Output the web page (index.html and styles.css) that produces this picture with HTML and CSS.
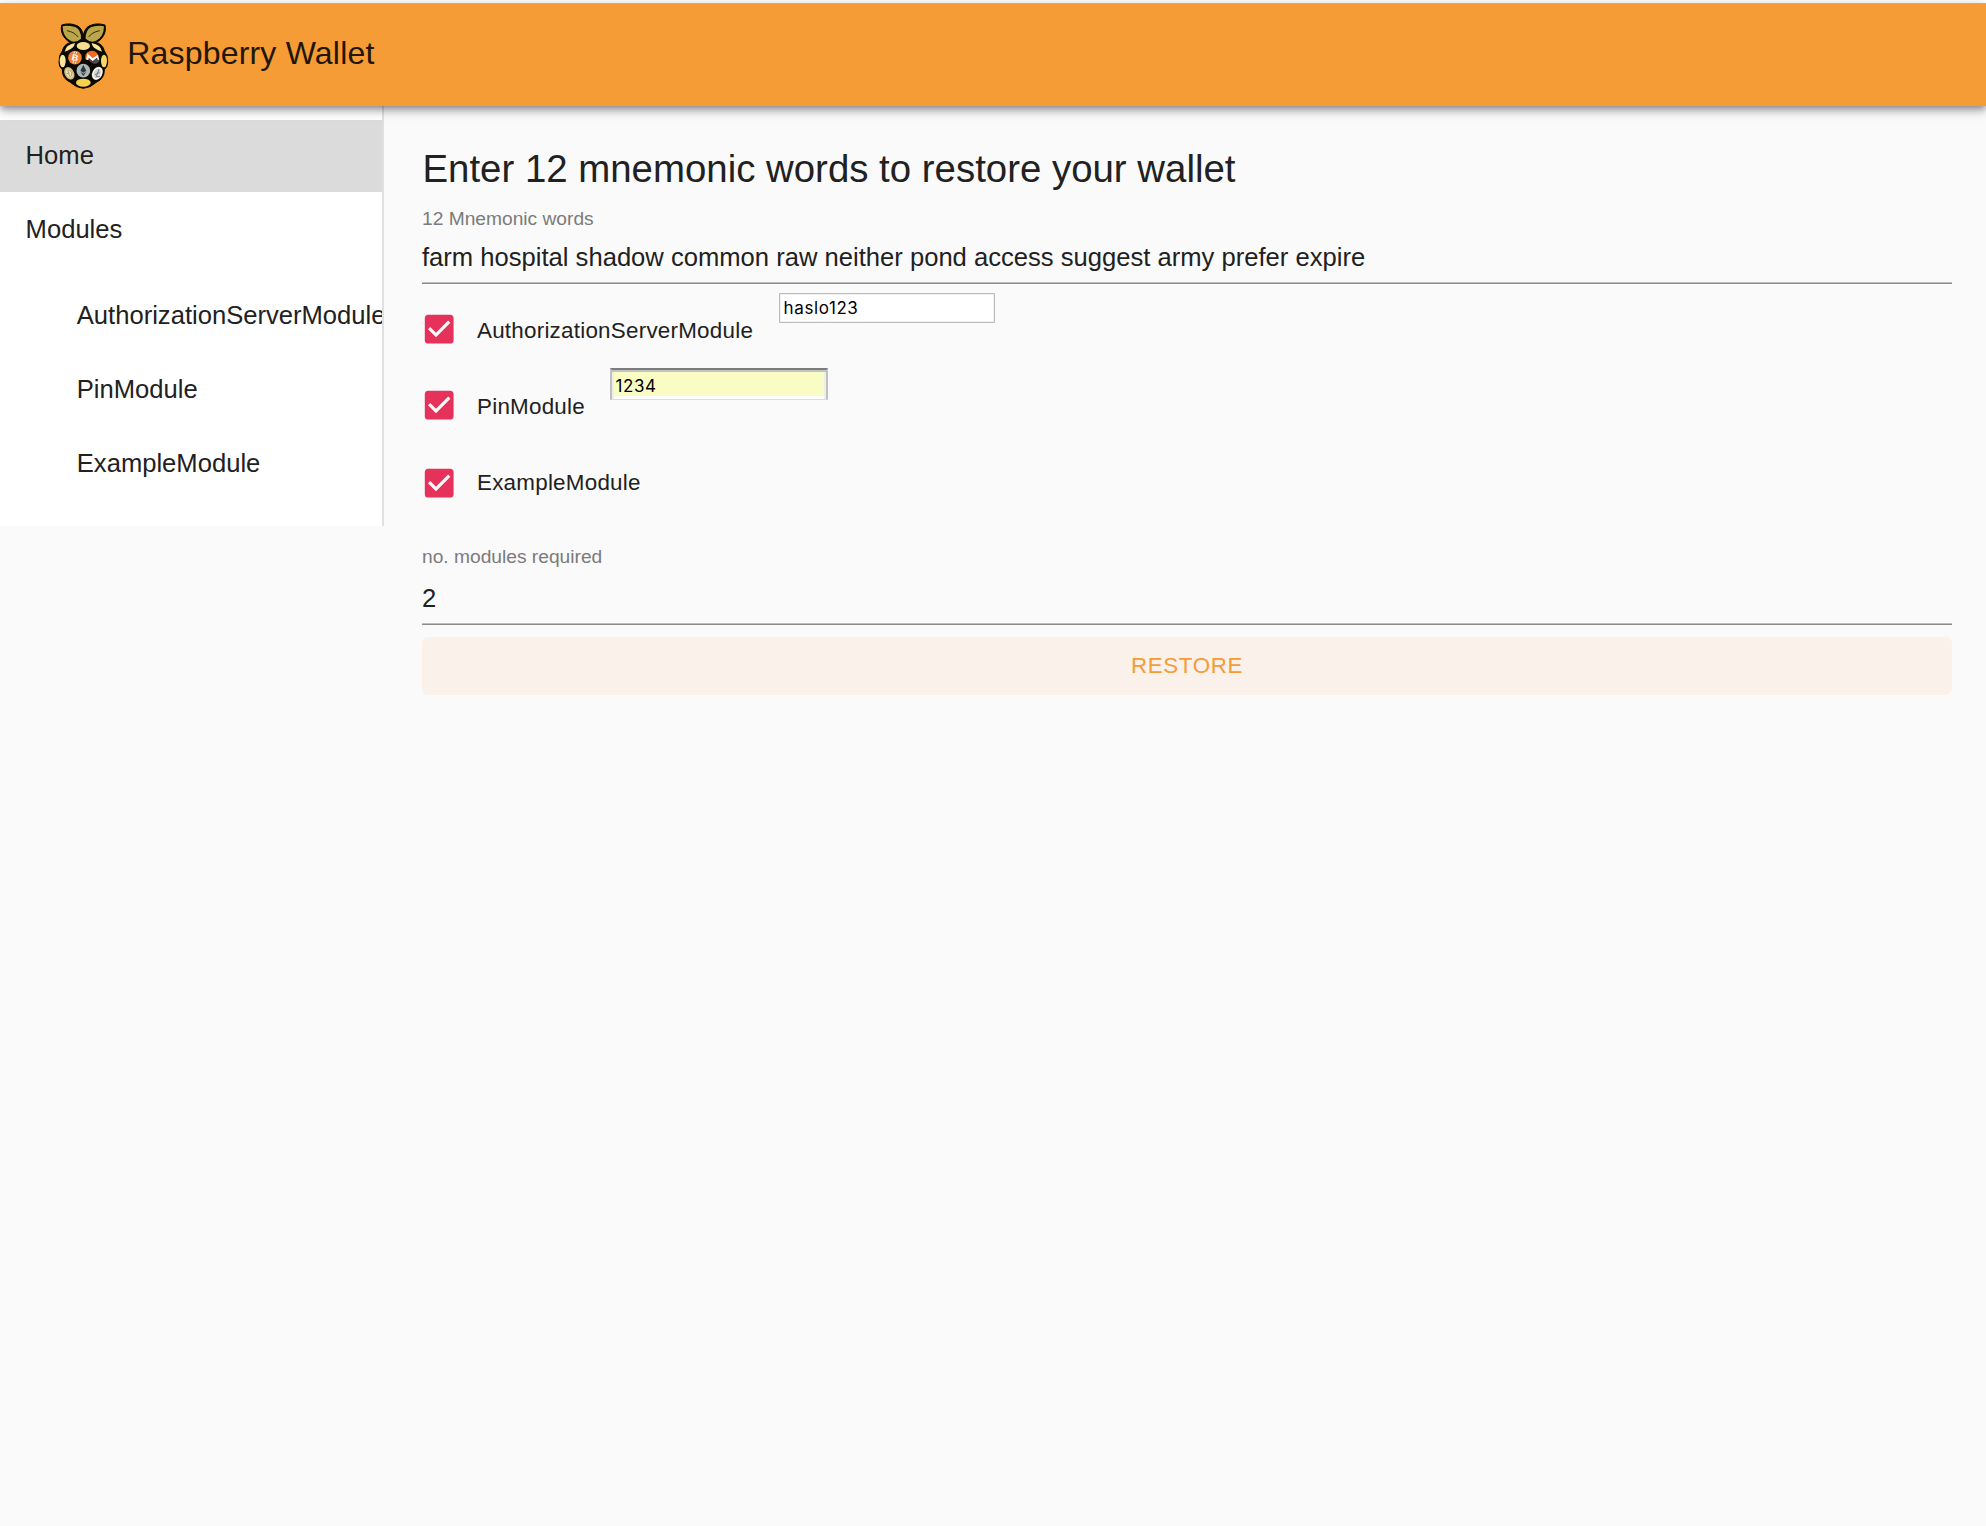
FILE: index.html
```html
<!DOCTYPE html>
<html lang="en">
<head>
<meta charset="utf-8">
<title>Raspberry Wallet</title>
<link rel="stylesheet" href="styles.css">
</head>
<body>
<header class="appbar">
  <svg class="logo" viewBox="50 38 158 200" aria-hidden="true">
    <path d="M64 44Q90 36 112 47Q126 55 129 77Q132 55 146 47Q168 36 194 44Q199 66 184 84Q177 93 167 96Q187 101 192 122Q203 134 202 156Q202 170 192 178Q193 205 168 216Q150 233 129 234Q108 233 90 216Q65 205 66 178Q56 170 56 156Q55 134 66 122Q71 101 91 96Q81 93 74 84Q59 66 64 44Z" fill="#0b0800" stroke="#0b0800" stroke-width="3"/>
    <path d="M67 48L78 46L91 47L105 50Q123 59 122 85Q105 100 88 90Q67 77 67 48ZM191 48L180 46L167 47L153 50Q135 59 136 85Q153 100 170 90Q191 77 191 48Z" fill="#bba64b"/>
    <path d="M80 61Q104 66 113 80M178 61Q154 66 145 80" fill="none" stroke="#1b1700" stroke-width="2.5"/>
    <ellipse cx="129" cy="107" rx="20" ry="12" fill="#f8df8c"/>
    <path d="M73 124Q76 103 104 98Q102 116 73 124ZM185 124Q182 103 154 98Q156 116 185 124Z" fill="#f8e49c"/>
    <ellipse cx="67" cy="152" rx="9" ry="19" fill="#f9e6a0"/>
    <ellipse cx="191" cy="152" rx="9" ry="19" fill="#f5d766"/>
    <ellipse cx="129" cy="217" rx="22" ry="12" fill="#f5d14d"/>
    <circle cx="104" cy="142" r="20.500" fill="#ef8133"/>
    <text class="coin" x="104" y="151" fill="#fff" transform="rotate(12 104 142)">B</text>
    <path d="M101 129l1-5M108 130l1-5M98 158l1-5M105 160l1-5" stroke="#fff" stroke-width="3"/>
    <path d="M135 147Q132 129 147 123Q166 117 175 136L176 143L172 135L156 147L141 130V148Z" fill="#f26822"/>
    <path d="M138 148L141 129L157 144L172 133L177 148L171 149L170 142L157 153L145 143V149Z" fill="#fff"/>
    <path d="M145 149L146 144L157 154L170 143L172 149H178Q174 162 161 160Q149 157 145 149Z" fill="#4d4d4d"/>
    <circle cx="129" cy="181" r="20.500" fill="#a9b7b9"/>
    <path d="M129 164L138 181L129 187L120 181ZM120 184L129 190L138 184L129 197Z" fill="#303638"/>
    <ellipse cx="87" cy="189" rx="14" ry="20" transform="rotate(-28 87 189)" fill="#cfba79"/>
    <ellipse cx="87" cy="189" rx="9" ry="14" transform="rotate(-28 87 189)" fill="#eee5c5"/>
    <path d="M82 180l6-1q10 8 6 18l-6 1zM79 190l9-2" fill="none" stroke="#b59d57" stroke-width="3"/>
    <ellipse cx="171" cy="189" rx="15" ry="21" transform="rotate(28 171 189)" fill="#d7d7d7"/>
    <ellipse cx="171" cy="189" rx="12" ry="17" transform="rotate(28 171 189)" fill="none" stroke="#fff" stroke-width="3"/>
    <path d="M176 177L168 199H179M164 193L178 186" fill="none" stroke="#777" stroke-width="3"/>
  </svg>
  <span class="brand">Raspberry Wallet</span>
</header>
<div class="layout">
  <nav class="drawer">
    <a class="item selected">Home</a>
    <a class="item">Modules</a>
    <div class="sub">
      <a class="item">AuthorizationServerModule</a>
      <a class="item">PinModule</a>
      <a class="item">ExampleModule</a>
    </div>
  </nav>
  <main class="content">
    <h1 class="heading">Enter 12 mnemonic words to restore your wallet</h1>
    <div class="label">12 Mnemonic words</div>
    <div class="field">farm hospital shadow common raw neither pond access suggest army prefer expire</div>
    <div class="modules">
      <div class="row">
        <svg class="check" viewBox="0 0 24 24"><path d="M19 3H5c-1.110 0-2 .9-2 2v14c0 1.100.89 2 2 2h14c1.110 0 2-.9 2-2V5c0-1.100-.89-2-2-2zm-9 14l-5-5 1.410-1.410L10 14.170l7.590-7.590L19 8l-9 9z"/></svg>
        <span class="name">AuthorizationServerModule</span>
        <div class="entry">haslo123</div>
      </div>
      <div class="row">
        <svg class="check" viewBox="0 0 24 24"><path d="M19 3H5c-1.110 0-2 .9-2 2v14c0 1.100.89 2 2 2h14c1.110 0 2-.9 2-2V5c0-1.100-.89-2-2-2zm-9 14l-5-5 1.410-1.410L10 14.170l7.590-7.590L19 8l-9 9z"/></svg>
        <span class="name">PinModule</span>
        <div class="entry autofill">1234</div>
      </div>
      <div class="row last">
        <svg class="check" viewBox="0 0 24 24"><path d="M19 3H5c-1.110 0-2 .9-2 2v14c0 1.100.89 2 2 2h14c1.110 0 2-.9 2-2V5c0-1.100-.89-2-2-2zm-9 14l-5-5 1.410-1.410L10 14.170l7.590-7.590L19 8l-9 9z"/></svg>
        <span class="name">ExampleModule</span>
      </div>
    </div>
    <div class="label required">no. modules required</div>
    <div class="field count">2</div>
    <button class="restore">RESTORE</button>
  </main>
</div>
</body>
</html>
```
FILE: styles.css
```css
* { box-sizing: border-box; }
body {
  margin: 0;
  min-height: 1526px;
  padding-top: 3px;
  background: linear-gradient(#fff 3px, #fafafa 3px);
  color: #212121;
  font-family: "Liberation Sans", Arial, sans-serif;
}
.appbar {
  position: relative;
  z-index: 1;
  display: flex;
  align-items: flex-start;
  height: 103px;
  padding-left: 56.500px;
  border-top: 1px solid #b5afa9;
  background: #f59c37;
  box-shadow: 0 3px 6px -1px rgba(0,0,0,.3), 0 6px 8px rgba(0,0,0,.16), 0 2px 16px rgba(0,0,0,.12);
}
.logo { width: 52.670px; height: 66.670px; margin-top: 18.670px; }
.coin { font-size: 27px; font-weight: bold; text-anchor: middle; }
.brand {
  margin: 29px 0 0 18px;
  font-size: 32px;
  line-height: 40px;
  color: #221607;
  letter-spacing: .2px;
}
.layout { display: flex; align-items: flex-start; }
.drawer {
  flex: none;
  width: 384px;
  height: 420px;
  padding-top: 14px;
  overflow: hidden;
  background: #fff;
  border-right: 2px solid #e0e0e0;
}
.item {
  display: flex;
  align-items: center;
  height: 72px;
  margin-bottom: 2px;
  padding: 0 0 1px 25.600px;
  font-size: 25.600px;
  white-space: nowrap;
}
.selected { background: #dbdbdb; }
.sub { padding: 12px 0 0 51.200px; }
.content { flex: 1; padding: 41px 34px 0 38px; }
.heading { margin: 0; padding-left: .5px; font-size: 38.400px; line-height: 44px; font-weight: 400; }
.label { margin-top: 17px; font-size: 19.200px; line-height: 22px; color: #7b7b7b; }
.field {
  padding: 6px 0 5px;
  border-bottom: 1px solid #8c8c8c;
  box-shadow: inset 0 -1px #bdbdbd;
  font-size: 25.600px;
  line-height: 42px;
}
.modules { padding-top: 8px; }
.row { display: flex; align-items: flex-start; height: 76px; }
.check { width: 38.400px; height: 38.400px; margin: 17.600px 0 0 -2.200px; fill: #e6325b; }
.last .check { margin-top: 19.600px; }
.name { margin: 0 25.500px 0 18.800px; font-size: 22.400px; line-height: 78px; letter-spacing: .24px; }
.entry {
  width: 216px;
  height: 30px;
  margin-top: 1px;
  padding-left: 4px;
  background: #fff;
  border: 1px solid #bdbdbd;
  box-shadow: inset 0 0 0 1px #f0f0f0;
  color: #000;
  font: 17px/29px Inter, sans-serif;
  letter-spacing: .6px;
}
.autofill {
  width: 218px;
  height: 32px;
  margin-top: 0;
  padding-left: 3px;
  background: #fafdc3;
  border: 2px solid #c0c0c0;
  border-top-color: #7c7c7c;
  border-bottom: 1px solid #dcdcdc;
  box-shadow: inset 0 2px #c3c3c3, inset 2px 0 #eee, inset -2px 0 #eee, inset 0 -3px #fff;
  line-height: 33px;
}
.required { margin-top: 26px; }
.count { padding: 9px 0 5px; }
.restore {
  display: block;
  width: 100%;
  height: 58px;
  margin-top: 12px;
  padding: 0;
  border: 0;
  border-radius: 6.400px;
  background: #f9f1ea;
  color: #f59c37;
  font: 22.400px/56px "Liberation Sans", Arial, sans-serif;
  letter-spacing: .6px;
}
```
